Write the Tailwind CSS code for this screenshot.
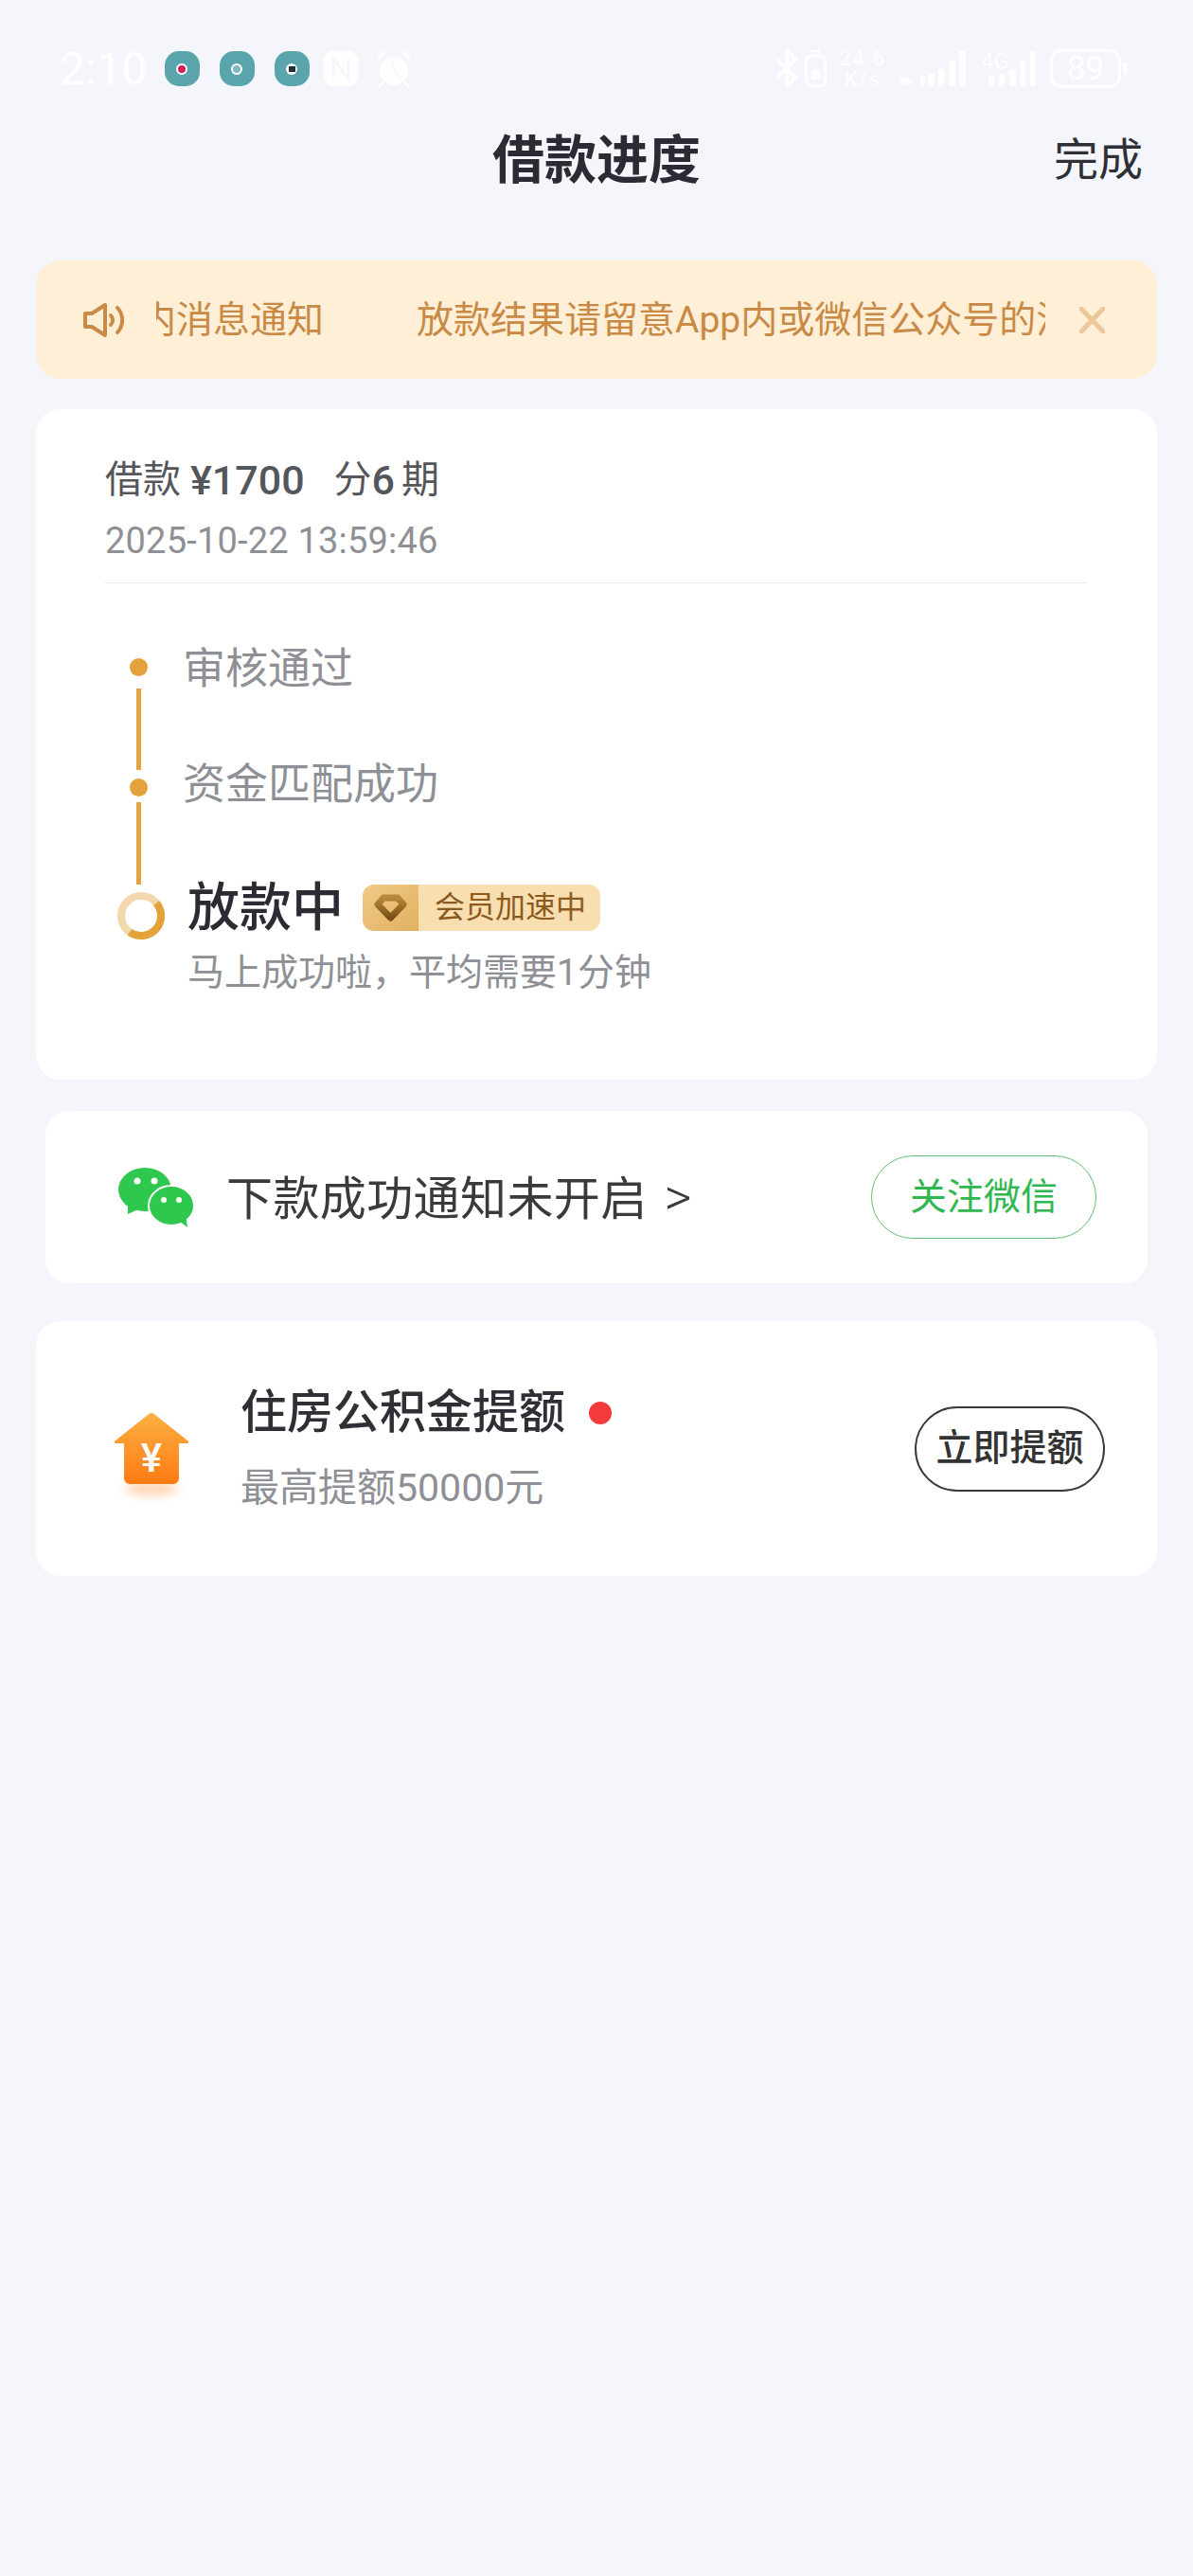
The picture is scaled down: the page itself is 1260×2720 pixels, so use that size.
<!DOCTYPE html>
<html lang="zh">
<head>
  <meta charset="UTF-8" />
  <title>借款进度</title>
  <script src="https://cdn.jsdelivr.net/npm/@tailwindcss/browser@4"></script>
</head>
<body class="bg-[#f4f6fb] font-['Roboto','Noto_Sans_CJK_SC',sans-serif]">
  <div class="w-[1260px] h-[2720px] overflow-hidden">

    <!-- status bar -->
    <div class="h-[135px] flex items-start justify-between pl-[63px] pr-[69px] pt-[52px]">
      <div class="flex items-center h-[41px]">
        <span class="text-[48px] leading-[41px] text-white/90">2:10</span>
        <div class="ml-[18px] w-[37px] h-[37px] rounded-[15px] bg-[#5aa5ab] flex items-center justify-center">
          <span class="w-[12px] h-[12px] rounded-full bg-[#cf1f5e] border-2 border-white"></span>
        </div>
        <div class="ml-[21px] w-[37px] h-[37px] rounded-[15px] bg-[#5aa5ab] flex items-center justify-center">
          <span class="w-[12px] h-[12px] rounded-full bg-[#7fb9bd] border-2 border-white"></span>
        </div>
        <div class="ml-[21px] w-[37px] h-[37px] rounded-[15px] bg-[#5aa5ab] flex items-center justify-center">
          <span class="w-[12px] h-[12px] rounded-full bg-white flex items-center justify-center"><span class="w-[7px] h-[6px] bg-[#22303a]"></span></span>
        </div>
        <svg class="ml-[15px]" width="36" height="37" viewBox="0 0 36 37"><rect width="36" height="37" rx="9" fill="#fff" fill-opacity=".9"/><path d="M10 29V8l16 21V8" fill="none" stroke="#f4f6fb" stroke-width="2.5"/></svg>
        <svg class="ml-[19px]" width="38" height="40" viewBox="0 0 38 40"><circle cx="19" cy="22" r="15" fill="#fff" fill-opacity=".9"/><path d="M2 9l8-7M36 9l-8-7M8 34l-5 5M30 34l5 5" stroke="#fff" stroke-opacity=".9" stroke-width="3"/><path d="M17 11l3 12 6 7" fill="none" stroke="#f4f6fb" stroke-width="2"/></svg>
      </div>
      <div class="flex items-center h-[41px]">
        <svg width="23" height="41" viewBox="0 0 23 41"><path d="M1 11l19 19-9 9V2l9 9L1 30" fill="none" stroke="#fff" stroke-opacity=".85" stroke-width="4"/></svg>
        <svg class="ml-[7px]" width="23" height="41" viewBox="0 0 23 41"><rect x="1.5" y="7" width="20" height="32" rx="5" fill="none" stroke="#fff" stroke-opacity=".85" stroke-width="3"/><rect x="7" y="1" width="9" height="2.5" fill="#fff" fill-opacity=".85"/><rect x="7" y="22" width="9" height="10" fill="#fff" fill-opacity=".85"/></svg>
        <div class="ml-[13px] w-[50px] text-center text-[22px] leading-[22px] tracking-[1.5px] text-white/80">24.6<br />K/s</div>
        <svg class="ml-[14px]" width="70" height="38" viewBox="0 0 70 38"><g fill="#fff" fill-opacity=".85"><path d="M0 32l4-5v10zM9 27v10l5-5z"/><rect x="5" y="28" width="3" height="9"/><rect x="22" y="27" width="5" height="10"/><rect x="30" y="24" width="7" height="13"/><rect x="41" y="19" width="6" height="18"/><rect x="52" y="10" width="7" height="27"/><rect x="63" y="0" width="7" height="37"/></g></svg>
        <svg class="ml-[16px] overflow-visible" width="58" height="38" viewBox="0 0 58 38"><text x="0" y="19" font-size="24" fill="#fff" fill-opacity=".85">4G</text><g fill="#fff" fill-opacity=".85"><rect x="8" y="27" width="6" height="10"/><rect x="19" y="24" width="6" height="13"/><rect x="30" y="19" width="7" height="18"/><rect x="41" y="10" width="6" height="27"/><rect x="52" y="0" width="6" height="37"/></g></svg>
        <div class="ml-[15px] w-[75px] h-[41px] rounded-[12px] border-[3px] border-white/90 flex items-center justify-center text-[35px] leading-none text-white/90">89</div>
        <span class="ml-[2px] w-[5px] h-[13px] rounded-r-[3px] bg-white/90"></span>
      </div>
    </div>

    <!-- title -->
    <div class="relative h-[68px] flex items-center justify-center">
      <span class="text-[55px] font-bold text-[#2b2c33]">借款进度</span>
      <span class="absolute right-[53px] text-[47px] text-[#2f3036]">完成</span>
    </div>

    <!-- notice -->
    <div class="mx-[38px] mt-[72px] h-[125px] rounded-[26px] bg-[#ffefd6] flex items-center pl-[50px]">
      <svg width="47" height="36" viewBox="0 0 47 36" fill="none" stroke="#c98a45" stroke-width="4" stroke-linejoin="round" stroke-linecap="round"><path d="M2 11v14h7l14 9V2L9 11z"/><path d="M29 13a7 7 0 0 1 0 10M36 5a19 19 0 0 1 0 26"/></svg>
      <div class="ml-[30px] w-[939px] overflow-hidden whitespace-nowrap text-[39px] leading-[50px] text-[#c98a45]">
        <span class="inline-block ml-[-18px] mr-[98px]">内消息通知</span><span class="inline-block">放款结果请留意App内或微信公众号的消息通知</span>
      </div>
      <svg class="ml-[36px]" width="27" height="28" viewBox="0 0 27 28" fill="none" stroke="#ecc79c" stroke-width="5" stroke-linecap="round"><path d="M2 2l23 24M25 2L2 26"/></svg>
    </div>

    <!-- progress card -->
    <div class="mx-[38px] mt-[32px] h-[708px] rounded-[26px] bg-white pl-[72px] pr-[74px] pt-[47px]">
      <div class="flex items-center h-[56px] text-[40px] text-[#55565b]">
        <span class="ml-[1px]">借款</span>
        <span class="ml-[10px] text-[43px] font-medium">¥1700</span>
        <span class="ml-[31px]">分</span>
        <span class="text-[43px] font-medium">6</span>
        <span class="ml-[7px]">期</span>
      </div>
      <div class="mt-[14px] ml-[1px] h-[44px] text-[38px] leading-[44px] tracking-[0.2px] text-[#8e9096]">2025-10-22 13:59:46</div>
      <div class="mt-[22px] border-t border-[#eeeeee]"></div>

      <div class="flex pl-[14px]">
        <div class="w-[52px] flex flex-col pt-[79px]">
          <span class="ml-[13px] w-[19px] h-[19px] rounded-full bg-[#e5a23c]"></span>
          <span class="ml-[20px] mt-[13px] w-[5px] h-[86px] bg-[#e3a544]"></span>
          <span class="ml-[13px] mt-[9px] w-[19px] h-[19px] rounded-full bg-[#e5a23c]"></span>
          <span class="ml-[20px] mt-[6px] w-[5px] h-[87px] bg-[#e3a544]"></span>
          <svg class="mt-[8px]" width="50" height="50" viewBox="0 0 50 50" fill="none" stroke-width="8"><circle cx="25" cy="25" r="21" stroke="#f3d8ad"/><path d="M41.1 11.5A21 21 0 0 1 12.95 42.2" stroke="#e3a23a"/></svg>
        </div>
        <div class="ml-[17px] pt-[61px]">
          <div class="h-[60px] text-[45px] leading-[60px] text-[#8e9096]">审核通过</div>
          <div class="mt-[62px] h-[60px] text-[45px] leading-[60px] text-[#8e9096]">资金匹配成功</div>
          <div class="mt-[69px] ml-[5px] h-[60px] flex items-center">
            <span class="text-[55px] leading-[60px] font-medium text-[#2b2c33]">放款中</span>
            <div class="ml-[20px] w-[251px] h-[49px] rounded-[12px] bg-[#f9deb0] flex items-center overflow-hidden">
              <div class="w-[59px] h-full bg-gradient-to-br from-[#f2cb87] to-[#e0b060] flex items-center justify-center">
                <svg width="35" height="30" viewBox="0 0 35 30" fill="none"><defs><linearGradient id="gem" x1="0" y1="0" x2="0" y2="1"><stop offset="0" stop-color="#b68a3a"/><stop offset="1" stop-color="#7a4f17"/></linearGradient></defs><path d="M10 5h15l6 7-13.500 14L4 12z" stroke="url(#gem)" stroke-width="7" stroke-linejoin="round"/></svg>
              </div>
              <span class="ml-[17px] text-[32px] leading-none text-[#8a5a1e]">会员加速中</span>
            </div>
          </div>
          <div class="mt-[17px] ml-[5px] h-[44px] text-[39px] leading-[44px] text-[#8e9096] whitespace-nowrap">马上成功啦，平均需要1分钟</div>
        </div>
      </div>
    </div>

    <!-- wechat notice card -->
    <div class="mx-[48px] mt-[33px] h-[182px] rounded-[26px] bg-white flex items-center pl-[77px] pr-[54px]">
      <svg width="80" height="63" viewBox="0 0 80 63">
        <ellipse cx="28" cy="23" rx="28" ry="23" fill="#2ec84e"/>
        <path d="M10 38v11l13-6z" fill="#2ec84e"/>
        <ellipse cx="56" cy="40" rx="24" ry="21" fill="#2ec84e" stroke="#fff" stroke-width="2"/>
        <path d="M64 56l9 7-2-13z" fill="#2ec84e"/>
        <circle cx="20" cy="14" r="3.500" fill="#fff"/><circle cx="38" cy="14" r="3.500" fill="#fff"/>
        <circle cx="48" cy="34" r="3" fill="#fff"/><circle cx="64" cy="34" r="3" fill="#fff"/>
      </svg>
      <span class="ml-[34px] text-[49px] tracking-[0.4px] text-[#3a3a3a] whitespace-nowrap">下款成功通知未开启<span class="ml-[18px] text-[56px] font-light">&gt;</span></span>
      <div class="ml-auto w-[238px] h-[88px] rounded-full border border-[#5fc06f] flex items-center justify-center text-[39px] text-[#2fb84f]">关注微信</div>
    </div>

    <!-- housing fund card -->
    <div class="mx-[38px] mt-[40px] h-[269px] rounded-[26px] bg-white flex items-start pl-[82px] pr-[55px]">
      <svg class="mt-[97px]" width="80" height="100" viewBox="0 0 80 100">
        <defs>
          <linearGradient id="house" x1="0" y1="0" x2="0" y2="1"><stop offset="0" stop-color="#fdb044"/><stop offset="1" stop-color="#ff7a12"/></linearGradient>
          <filter id="soft" x="-50%" y="-100%" width="200%" height="300%"><feGaussianBlur stdDeviation="5"/></filter>
        </defs>
        <ellipse cx="40" cy="80" rx="28" ry="7" fill="#ff8a2a" fill-opacity=".35" filter="url(#soft)"/>
        <path d="M36 2a5 5 0 0 1 8 0l34 27q3 3-1 3H69v37a6 6 0 0 1-6 6H17a6 6 0 0 1-6-6V32H3q-4 0-1-3z" fill="url(#house)"/>
        <text x="40" y="62" text-anchor="middle" font-size="42" font-weight="500" fill="#fff">¥</text>
      </svg>
      <div class="ml-[54px] pt-[67px]">
        <div class="flex items-center h-[60px]">
          <span class="text-[49px] font-medium text-[#2f3036]">住房公积金提额</span>
          <span class="ml-[25px] w-[24px] h-[24px] rounded-full bg-[#f43a3a]"></span>
        </div>
        <div class="mt-[24px] h-[50px] text-[41px] leading-[50px] text-[#8e9096]">最高提额50000元</div>
      </div>
      <div class="ml-auto self-center w-[201px] h-[90px] rounded-full border-2 border-[#3a3a3a] flex items-center justify-center text-[39px] font-medium text-[#333333]">立即提额</div>
    </div>

  </div>
</body>
</html>
